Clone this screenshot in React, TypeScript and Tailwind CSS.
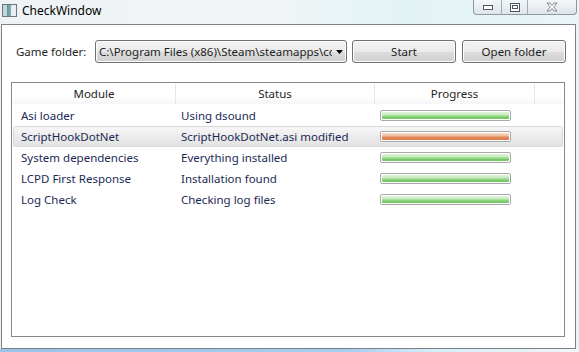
import React from "react";

type Row = { module: string; status: string; state: "ok" | "warn"; selected?: boolean };

const rows: Row[] = [
  { module: "Asi loader", status: "Using dsound", state: "ok" },
  { module: "ScriptHookDotNet", status: "ScriptHookDotNet.asi modified", state: "warn", selected: true },
  { module: "System dependencies", status: "Everything installed", state: "ok" },
  { module: "LCPD First Response", status: "Installation found", state: "ok" },
  { module: "Log Check", status: "Checking log files", state: "ok" },
];

const btn =
  "h-[23px] rounded-[3px] border border-[#707070] bg-[linear-gradient(#f2f2f2_0%,#ebebeb_50%,#dddddd_51%,#cfcfcf_100%)] shadow-[inset_0_0_0_1px_#fcfcfc] text-[#1e1e1e] flex items-center justify-center";

const ProgressBar = ({ state }: { state: "ok" | "warn" }) => (
  <div className="w-[131px] h-[11px] rounded-[2px] border border-[#a9a9a9] bg-white p-px">
    <div
      className={
        state === "ok"
          ? "h-full rounded-[1px] bg-[linear-gradient(#e2f5dd_0%,#c9ecc0_35%,#a4dd96_55%,#68c457_85%,#86d176_100%)]"
          : "h-full rounded-[1px] bg-[linear-gradient(#f9ddcc_0%,#f2c2a6_35%,#e9976a_55%,#db7440_85%,#e59165_100%)]"
      }
    />
  </div>
);

export default function App() {
  return (
    <div
      className="w-[579px] h-[352px] overflow-hidden flex flex-col bg-[linear-gradient(90deg,#eef2f4_0%,#f2f5f6_45%,#e2f3f6_70%,#e9f4f7_100%)] text-[11.5px]"
      style={{ fontFamily: '"Segoe UI", "Noto Sans", "Open Sans", sans-serif' }}
    >
      {/* title bar */}
      <div className="h-[24px] shrink-0 flex items-start">
        <div className="mt-[4px] ml-[2px] w-[15px] h-[13px] border border-[#6b7682] bg-[linear-gradient(90deg,#c9d3db_0%,#c9d3db_30%,#5e8fa8_30%,#7fb3a0_60%,#e8eef2_60%)]" />
        <span className="ml-[5px] mt-[2px] text-[12px] text-black">CheckWindow</span>
        <div className="ml-auto mr-[2px] flex h-[15px] border border-t-0 border-[#8d98a4] rounded-b-[4px] bg-[linear-gradient(#f4f7f9,#dde5eb)]">
          <div className="w-[28px] flex items-center justify-center border-r border-[#a2acb6]">
            <svg width="10" height="5" viewBox="0 0 10 5">
              <rect x="0.5" y="0.5" width="9" height="4" fill="#fff" stroke="#4c5662" />
            </svg>
          </div>
          <div className="w-[26px] flex items-center justify-center border-r border-[#a2acb6]">
            <svg width="10" height="9" viewBox="0 0 10 9">
              <rect x="0.5" y="0.5" width="9" height="8" fill="#fff" stroke="#4c5662" />
              <rect x="2.5" y="2.5" width="5" height="3" fill="none" stroke="#4c5662" />
            </svg>
          </div>
          <div className="w-[48px] flex items-center justify-center">
            <svg width="12" height="10" viewBox="0 0 12 10">
              <path
                d="M1 1h3l2 2.5L8 1h3L7.7 5 11 9H8L6 6.5 4 9H1l3.3-4z"
                fill="#fff"
                stroke="#5f6a76"
                strokeWidth="0.8"
              />
            </svg>
          </div>
        </div>
      </div>

      {/* client area */}
      <div className="ml-[1px] w-[575px] h-[325px] shrink-0 border border-[#7b8189] bg-white flex flex-col">
        <div className="flex items-center mt-[15px] h-[23px]">
          <span className="ml-[14px] w-[79px] text-[#1e1e1e]">Game folder:</span>
          <div className={btn + " w-[252px] justify-start! pl-[3px]"}>
            <span className="whitespace-nowrap overflow-hidden w-[233px]">
              C:\Program Files (x86)\Steam\steamapps\common
            </span>
            <svg className="ml-[4px]" width="7" height="4" viewBox="0 0 7 4">
              <path d="M0 0h7L3.5 4z" fill="#000" />
            </svg>
          </div>
          <div className={btn + " w-[104px] ml-[5px]"}>Start</div>
          <div className={btn + " w-[104px] ml-[6px]"}>Open folder</div>
        </div>

        {/* list view */}
        <div className="ml-[9px] mt-[19px] w-[554px] h-[255px] border border-[#828790] flex flex-col px-[1px] pt-[1px]">
          <div className="flex h-[20px] shrink-0 bg-[linear-gradient(#ffffff_0%,#ffffff_60%,#f5f6f7_100%)] text-[#1e1e1e]">
            <div className="w-[163px] flex items-center justify-center border-r border-[#e3e5e8]">Module</div>
            <div className="w-[199px] flex items-center justify-center border-r border-[#e3e5e8]">Status</div>
            <div className="w-[160px] flex items-center justify-center border-r border-[#e3e5e8]">Progress</div>
            <div className="flex-1" />
          </div>
          <div className="flex flex-col mt-[1px]">
            {rows.map((r) => (
              <div
                key={r.module}
                className={
                  "flex items-center h-[21px] text-[#1b2a55] rounded-[2px] border " +
                  (r.selected
                    ? "border-[#d9d9d9] bg-[linear-gradient(#f7f7f7_0%,#ececec_50%,#e2e2e2_100%)]"
                    : "border-transparent")
                }
              >
                <div className="w-[163px] pl-[7px] whitespace-nowrap">{r.module}</div>
                <div className="w-[199px] pl-[4px] whitespace-nowrap">{r.status}</div>
                <div className="w-[160px] pl-[4px] flex items-center">
                  <ProgressBar state={r.state} />
                </div>
              </div>
            ))}
          </div>
        </div>
      </div>

      {/* desktop strip below */}
      <div className="flex-1 bg-[linear-gradient(90deg,#9cc3e8_0%,#a7cdf0_60%,#d6eef8_75%,#f2f6f7_100%)]" />
    </div>
  );
}
